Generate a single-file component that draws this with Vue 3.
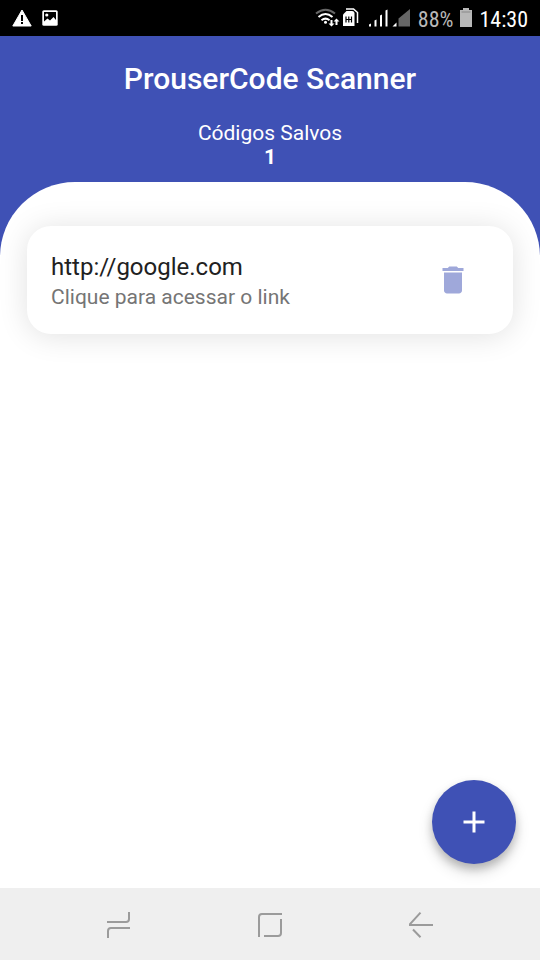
<script setup>
import { computed, ref } from 'vue'

const codes = ref([{ id: 1, url: 'http://google.com' }])
const total = computed(() => codes.value.length)

function remove(id) {
  codes.value = codes.value.filter((code) => code.id !== id)
}
</script>

<template>
  <div class="screen">
    <div class="status">
      <div class="status-left">
        <svg width="20" height="18" viewBox="0 0 20 18" aria-hidden="true">
          <path d="M10 1L19.200 17H.8z" fill="#fff" stroke="#fff" stroke-linejoin="round" />
          <path d="M9 6h2v6H9zM9 13h2v2H9z" fill="#000" />
        </svg>
        <svg width="16" height="16" viewBox="0 0 16 16" aria-hidden="true">
          <rect x=".3" y=".3" width="15.400" height="15.400" rx="1.500" fill="#fff" />
          <path d="M2 2h12v8l-2.500-3L8 10.500 5.500 8.500 2 11.500z" fill="#000" />
          <circle cx="4.800" cy="5" r="1.600" fill="#fff" />
        </svg>
      </div>
      <div class="status-right">
        <svg width="96" height="20" viewBox="0 0 96 20" aria-hidden="true">
          <g fill="none" stroke="#fff" stroke-width="2">
            <path d="M1 5.500Q10.500-2 20 5.500" stroke="#666" />
            <path d="M3.500 9Q10.500 3 17.500 9" />
            <path d="M6.500 12.300Q10.500 9 14.500 12.300" />
          </g>
          <circle cx="10.500" cy="14.300" r="1.500" fill="#fff" />
          <path d="M15.500 12h2v3.500h2l-3 3-3-3h2zM20.500 17v-3.500h-2l3-3 3 3h-2V17z" fill="#fff" />
          <path d="M31 1h7.500l4 3.500V15" fill="none" stroke="#fff" stroke-width="1.500" />
          <path d="M31.500 3H37q2.500 0 2.500 2.500V18H28V6.500z" fill="#fff" />
          <path d="M31 8.500v6M36.500 8.500v6M33.800 8.500v6M31 11.500h5.500" fill="none" stroke="#000" stroke-width="1.200" />
          <path d="M54 18.500v-2l2-1v3zM59.500 18.500v-6l2-1v7zM65 18.500v-11l2-1v12zM70.500 18.500v-16l2-1v17z" fill="#fff" />
          <path d="M77.500 18.500l4-4v4z" fill="#fff" />
          <path d="M83.500 18.500v-8L95 1v17.500z" fill="#666" />
        </svg>
        <span class="level">88%</span>
        <svg width="12" height="20" viewBox="0 0 12 20" aria-hidden="true">
          <path d="M3 0h6v2h3v17H0V2h3z" fill="#b8b8b8" />
          <path d="M1.500 4h9" stroke="#888" />
        </svg>
        <span class="clock">14:30</span>
      </div>
    </div>

    <header class="header">
      <h1>ProuserCode Scanner</h1>
      <p>Códigos Salvos</p>
      <strong>{{ total }}</strong>
    </header>

    <main class="body">
      <ul class="list">
        <li v-for="code in codes" :key="code.id" class="card">
          <a class="link" :href="code.url">
            <span class="url">{{ code.url }}</span>
            <span class="hint">Clique para acessar o link</span>
          </a>
          <button class="delete" type="button" aria-label="Excluir" @click="remove(code.id)">
            <svg width="36" height="36" viewBox="0 0 24 24" aria-hidden="true">
              <path
                d="M6 19c0 1.100.9 2 2 2h8c1.100 0 2-.9 2-2V7H6v12zM19 4h-3.500l-1-1h-5l-1 1H5v2h14V4z"
                fill="#9fa8da"
              />
            </svg>
          </button>
        </li>
      </ul>
      <button class="fab" type="button" aria-label="Adicionar">
        <svg width="36" height="36" viewBox="0 0 24 24" aria-hidden="true">
          <path d="M19 13h-6v6h-2v-6H5v-2h6V5h2v6h6v2z" fill="#fff" />
        </svg>
      </button>
    </main>

    <nav class="nav">
      <button type="button" aria-label="Recentes">
        <svg width="24" height="28" viewBox="0 0 24 28" aria-hidden="true">
          <path d="M22 1v7q0 3-3 3H0M1 27v-7q0-3 3-3h19" />
        </svg>
      </button>
      <button type="button" aria-label="Início">
        <svg width="24" height="24" viewBox="0 0 24 24" aria-hidden="true">
          <path d="M1 24V4q0-3 3-3h20M23 6v14q0 3-3 3H6" />
        </svg>
      </button>
      <button type="button" aria-label="Voltar">
        <svg width="24" height="26" viewBox="0 0 24 26" aria-hidden="true">
          <path d="M11.500.7L1 12.200V13h23M4 17.500l7.500 7.800" />
        </svg>
      </button>
    </nav>
  </div>
</template>

<style>
body {
  margin: 0;
}
</style>

<style scoped>
.screen {
  display: flex;
  flex-direction: column;
  min-height: 100vh;
  background: #3f51b5;
  font-family: Roboto, sans-serif;
}

button {
  display: flex;
  align-items: center;
  justify-content: center;
  padding: 0;
  border: 0;
  background: none;
  cursor: pointer;
}

svg {
  display: block;
  flex: none;
}

.status {
  display: flex;
  align-items: center;
  justify-content: space-between;
  height: 36px;
  padding: 0 12px;
  background: #000;
}

.status-left {
  display: flex;
  align-items: center;
  gap: 10px;
}

.status-right {
  display: flex;
  align-items: center;
  gap: 7px;
  font-family: "Roboto Condensed", Roboto, sans-serif;
  font-size: 22px;
  line-height: 24px;
}

.level,
.clock {
  padding-top: 3px;
}

.level {
  color: #b8b8b8;
}

.clock {
  color: #fff;
}

.header {
  display: flex;
  flex-direction: column;
  align-items: center;
  padding: 25px 24px 13px;
  color: #fff;
  font-size: 21px;
  line-height: 24px;
}

.header h1 {
  margin: 0 0 24px;
  font-size: 30px;
  font-weight: 500;
  line-height: 36px;
}

.header p {
  margin: 0;
}

.body {
  position: relative;
  flex: 1;
  padding: 44px 27px 132px;
  border-radius: 75px 75px 0 0;
  background: #fff;
}

.list {
  display: grid;
  gap: 24px;
  margin: 0;
  padding: 0;
  list-style: none;
}

.card {
  display: flex;
  align-items: center;
  justify-content: space-between;
  padding: 25px 42px 25px 24px;
  border-radius: 24px;
  background: #fff;
  box-shadow: 0 2px 30px rgba(0, 0, 0, 0.12);
}

.link {
  display: grid;
  gap: 4px;
  padding-top: 2px;
  text-decoration: none;
}

.url {
  color: #212121;
  font-size: 24px;
  line-height: 28px;
}

.hint {
  color: #757575;
  font-size: 21px;
  line-height: 24px;
}

.fab {
  position: absolute;
  right: 24px;
  bottom: 24px;
  width: 84px;
  height: 84px;
  border-radius: 50%;
  background: #3f51b5;
  box-shadow: 0 5px 8px rgba(0, 0, 0, 0.2), 0 8px 15px rgba(0, 0, 0, 0.14);
}

.nav {
  display: grid;
  grid-template-columns: repeat(3, 1fr);
  height: 72px;
  padding: 1px 43px 0;
  box-sizing: border-box;
  background: #efefef;
}

.nav path {
  fill: none;
  stroke: #9b9b9b;
  stroke-width: 2;
}
</style>
